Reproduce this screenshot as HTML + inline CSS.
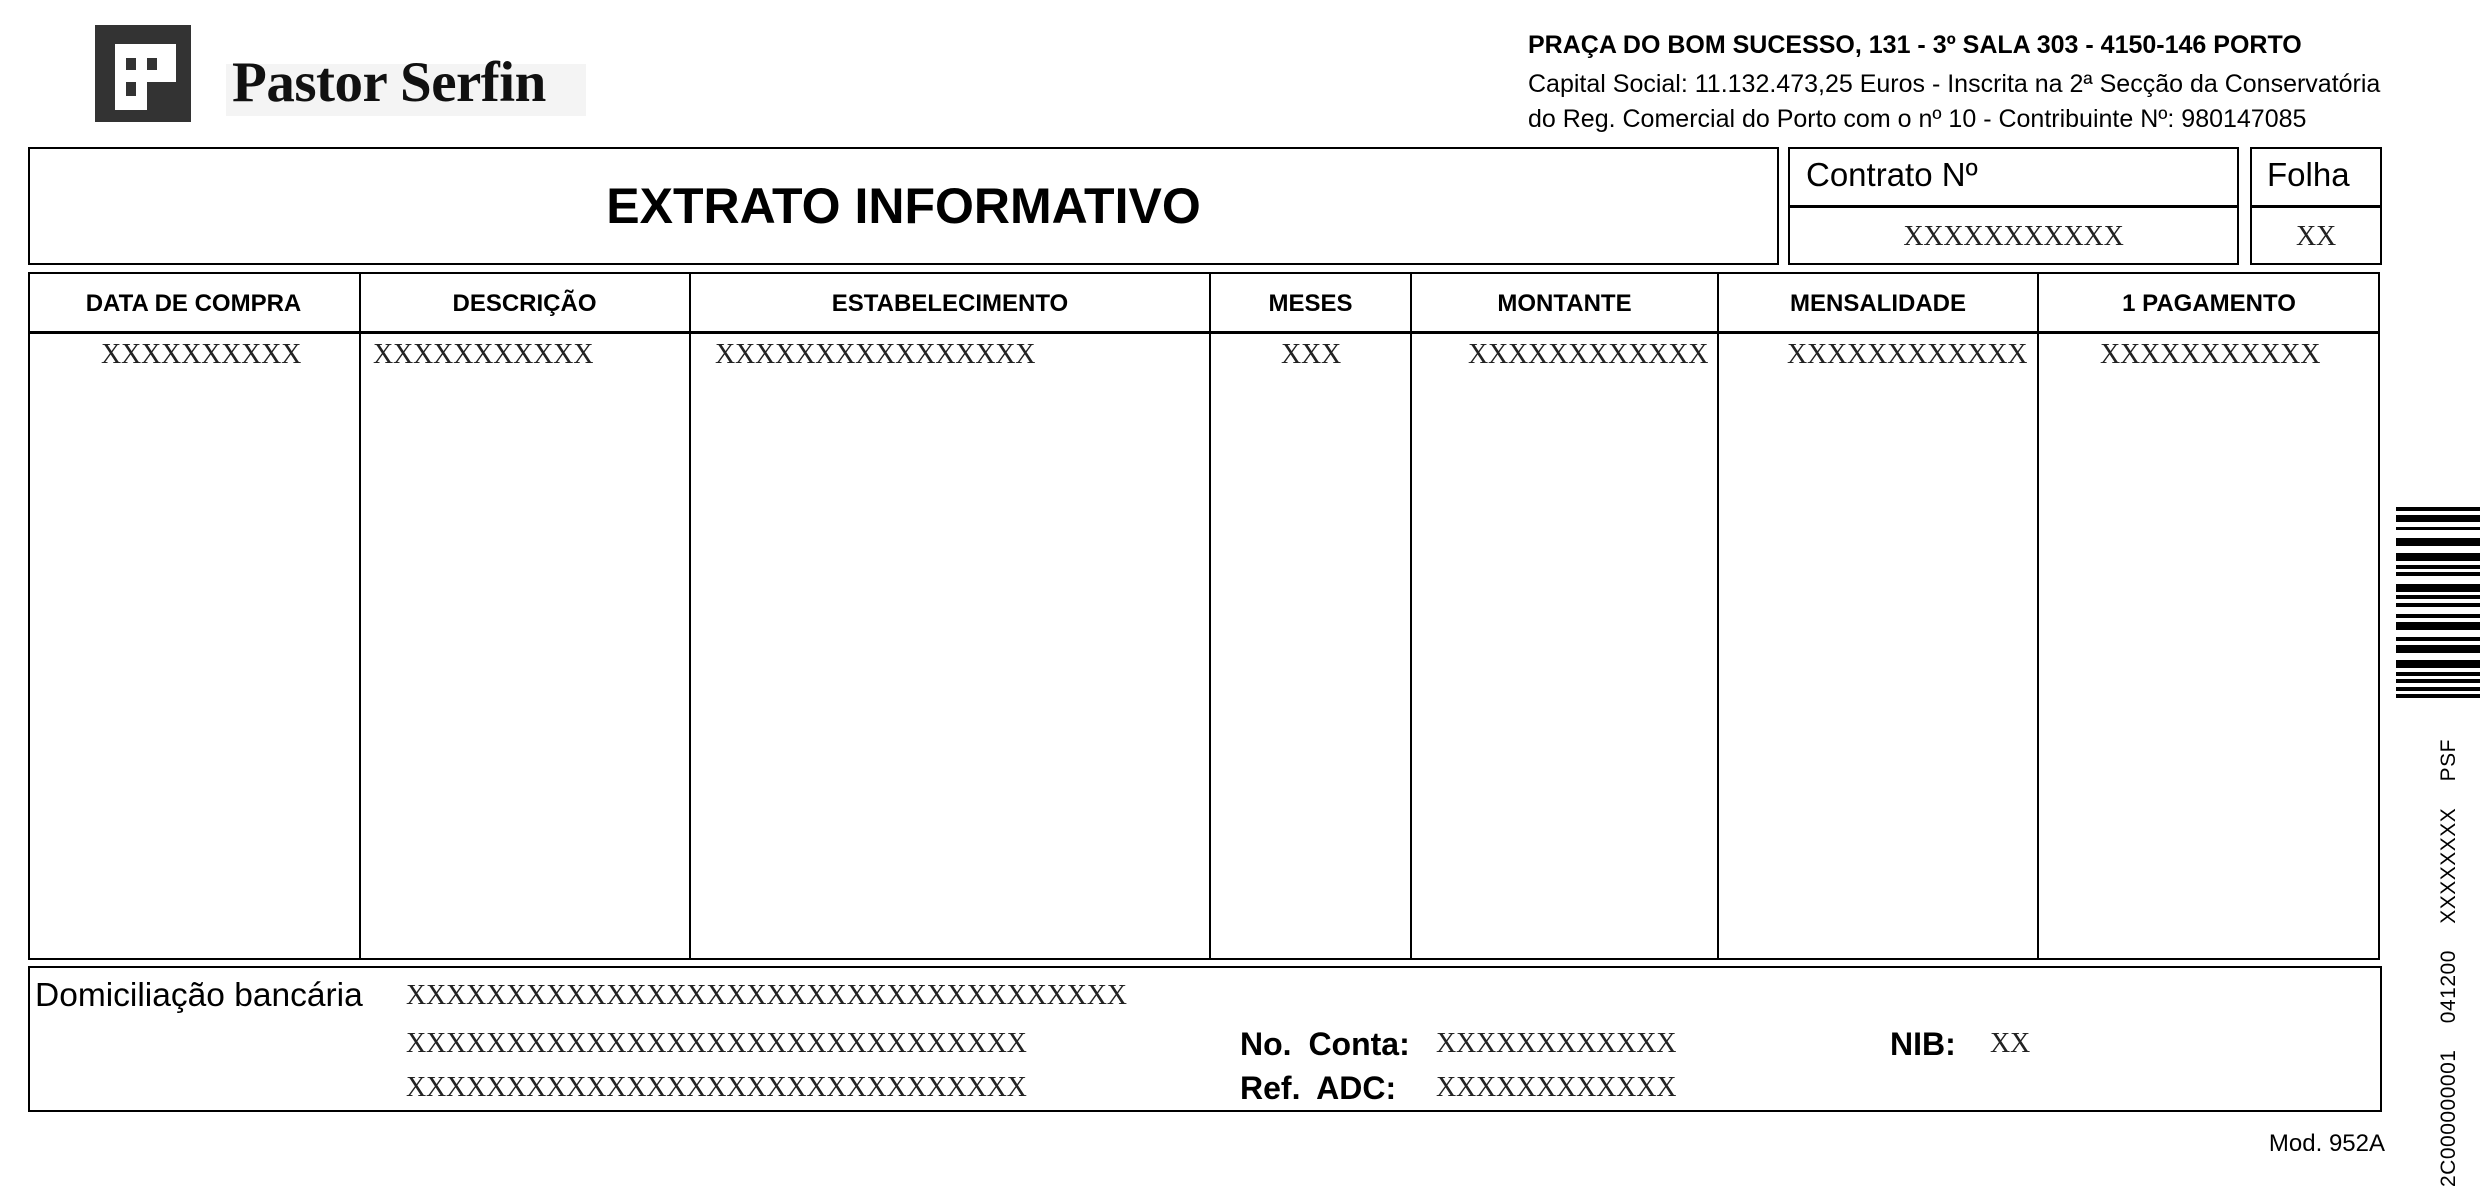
<!DOCTYPE html>
<html><head><meta charset="utf-8"><style>
body{margin:0;width:2480px;height:1200px;background:#fff;position:relative;overflow:hidden;font-family:"Liberation Sans",sans-serif;color:#000}
.a{position:absolute;white-space:nowrap}
.box{position:absolute;border:2.5px solid #000;box-sizing:border-box}
.x{font-family:"Liberation Serif",serif;font-size:28px;color:#222;letter-spacing:-0.2px}
.h{font-weight:bold;font-size:24px;text-align:center;top:290px}
.vl{position:absolute;top:272px;height:687px;width:2px;background:#000}
</style></head><body>
<div class="a" style="left:95px;top:25px;width:96px;height:97px;background:#333"></div>
<div class="a" style="left:115px;top:44px;width:49px;height:66px;background:#fff"></div>
<div class="a" style="left:164px;top:44px;width:12px;height:42px;background:#fff"></div>
<div class="a" style="left:126px;top:58px;width:10px;height:12px;background:#333"></div>
<div class="a" style="left:147px;top:58px;width:10px;height:12px;background:#333"></div>
<div class="a" style="left:126px;top:82px;width:10px;height:14px;background:#333"></div>
<div class="a" style="left:147px;top:82px;width:29px;height:28px;background:#333"></div>
<div class="a" style="left:226px;top:64px;width:360px;height:52px;background:#f4f4f4"></div>
<div class="a" style="left:232px;top:50px;font-family:'Liberation Serif',serif;font-weight:bold;font-size:57px;color:#111;letter-spacing:-0.5px">Pastor Serfin</div>

<div class="a" style="left:1528px;top:31px;font-size:25px;font-weight:bold">PRAÇA DO BOM SUCESSO, 131 - 3º SALA 303 - 4150-146 PORTO</div>
<div class="a" style="left:1528px;top:70px;font-size:25px">Capital Social: 11.132.473,25 Euros - Inscrita na 2ª Secção da Conservatória</div>
<div class="a" style="left:1528px;top:105px;font-size:25px">do Reg. Comercial do Porto com o nº 10 - Contribuinte Nº: 980147085</div>

<div class="box" style="left:28px;top:147px;width:1751px;height:118px"></div>
<div class="a" style="left:28px;width:1751px;text-align:center;top:177px;font-size:50px;font-weight:bold">EXTRATO INFORMATIVO</div>
<div class="box" style="left:1788px;top:147px;width:451px;height:118px"></div>
<div class="a" style="left:1788px;top:205px;width:451px;height:2.5px;background:#000"></div>
<div class="a" style="left:1806px;top:156px;font-size:33px">Contrato Nº</div>
<div class="a x" style="left:1788px;width:451px;text-align:center;top:221px">XXXXXXXXXXX</div>
<div class="box" style="left:2250px;top:147px;width:132px;height:118px"></div>
<div class="a" style="left:2250px;top:205px;width:132px;height:2.5px;background:#000"></div>
<div class="a" style="left:2267px;top:156px;font-size:33px">Folha</div>
<div class="a x" style="left:2250px;width:132px;text-align:center;top:221px">XX</div>

<div class="box" style="left:28px;top:272px;width:2352px;height:688px"></div>
<div class="a" style="left:28px;top:331px;width:2352px;height:2.5px;background:#000"></div>
<div class="vl" style="left:359px"></div><div class="vl" style="left:689px"></div><div class="vl" style="left:1209px"></div><div class="vl" style="left:1410px"></div><div class="vl" style="left:1717px"></div><div class="vl" style="left:2037px"></div>
<div class="a h" style="left:28px;width:331px">DATA DE COMPRA</div>
<div class="a h" style="left:359px;width:331px">DESCRIÇÃO</div>
<div class="a h" style="left:690px;width:520px">ESTABELECIMENTO</div>
<div class="a h" style="left:1210px;width:201px">MESES</div>
<div class="a h" style="left:1411px;width:307px">MONTANTE</div>
<div class="a h" style="left:1718px;width:320px">MENSALIDADE</div>
<div class="a h" style="left:2038px;width:342px">1 PAGAMENTO</div>
<div class="a x" style="left:101px;top:339px">XXXXXXXXXX</div>
<div class="a x" style="left:373px;top:339px">XXXXXXXXXXX</div>
<div class="a x" style="left:715px;top:339px">XXXXXXXXXXXXXXXX</div>
<div class="a x" style="left:1281px;top:339px">XXX</div>
<div class="a x" style="left:1468px;top:339px">XXXXXXXXXXXX</div>
<div class="a x" style="left:1787px;top:339px">XXXXXXXXXXXX</div>
<div class="a x" style="left:2100px;top:339px">XXXXXXXXXXX</div>

<div class="box" style="left:28px;top:966px;width:2354px;height:146px"></div>
<div class="a" style="left:35px;top:977px;font-size:33.5px">Domiciliação bancária</div>
<div class="a x" style="left:406px;top:980px">XXXXXXXXXXXXXXXXXXXXXXXXXXXXXXXXXXXX</div>
<div class="a x" style="left:406px;top:1028px">XXXXXXXXXXXXXXXXXXXXXXXXXXXXXXX</div>
<div class="a x" style="left:406px;top:1072px">XXXXXXXXXXXXXXXXXXXXXXXXXXXXXXX</div>
<div class="a" style="left:1240px;top:1026px;font-size:32px;font-weight:bold;word-spacing:8px">No. Conta:</div>
<div class="a x" style="left:1436px;top:1028px">XXXXXXXXXXXX</div>
<div class="a" style="left:1890px;top:1026px;font-size:32px;font-weight:bold">NIB:</div>
<div class="a x" style="left:1990px;top:1028px">XX</div>
<div class="a" style="left:1240px;top:1070px;font-size:32px;font-weight:bold;word-spacing:8px">Ref. ADC:</div>
<div class="a x" style="left:1436px;top:1072px">XXXXXXXXXXXX</div>

<div class="a" style="right:95px;top:1130px;font-size:24px">Mod. 952A</div>

<svg class="a" style="left:2396px;top:490px" width="84" height="220">
<g fill="#000">
<rect x="0" y="17" width="84" height="4"/><rect x="0" y="25" width="84" height="7"/><rect x="0" y="37" width="84" height="3"/>
<rect x="0" y="48" width="84" height="8"/><rect x="0" y="63" width="84" height="8"/><rect x="0" y="75" width="84" height="4"/>
<rect x="0" y="82" width="84" height="4"/><rect x="0" y="94" width="84" height="8"/><rect x="0" y="105" width="84" height="4"/>
<rect x="0" y="113" width="84" height="4"/><rect x="0" y="124" width="84" height="4"/><rect x="0" y="132" width="84" height="8"/>
<rect x="0" y="147" width="84" height="4"/><rect x="0" y="155" width="84" height="8"/><rect x="0" y="170" width="84" height="8"/>
<rect x="0" y="182" width="84" height="4"/><rect x="0" y="189" width="84" height="4"/><rect x="0" y="197" width="84" height="4"/>
<rect x="0" y="204" width="84" height="4"/>
</g></svg>
<div class="a" style="left:2450px;top:1187px;transform-origin:0 0;transform:rotate(-90deg) translateY(-13px);font-size:21px;word-spacing:20px;letter-spacing:0.5px">2C000000001 041200 XXXXXXXX PSF</div>
</body></html>
